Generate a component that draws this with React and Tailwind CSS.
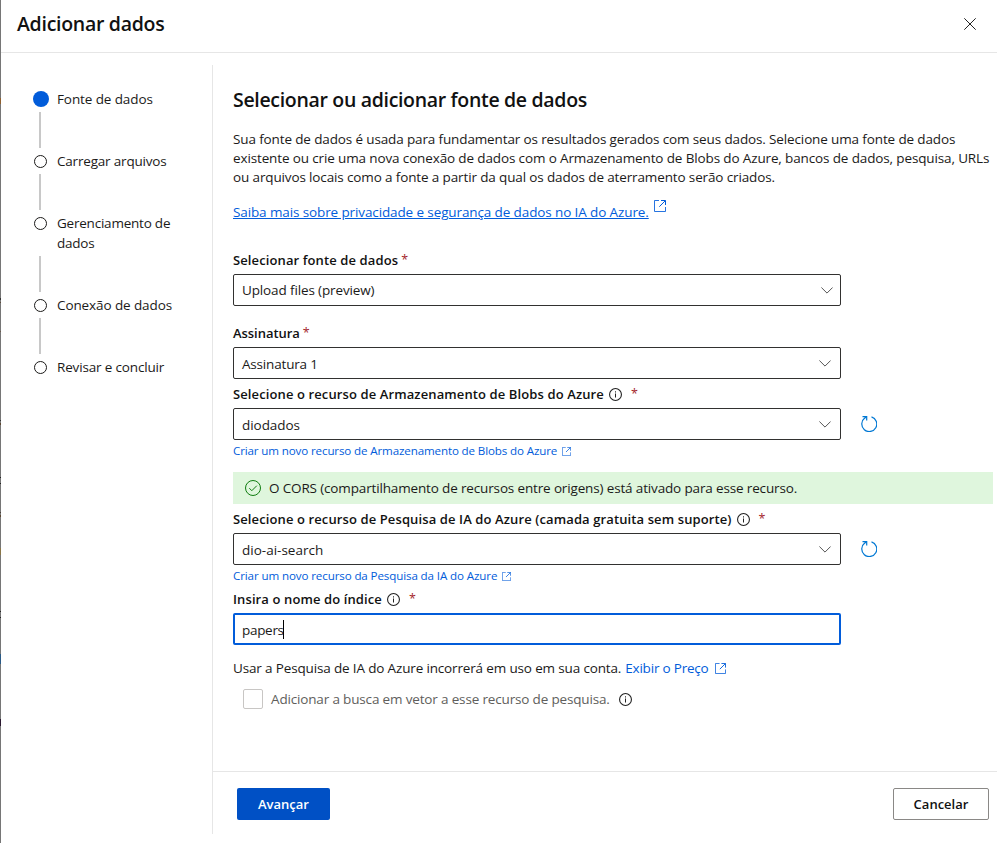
import React from "react";

const steps = [
  { lines: ["Fonte de dados"], active: true, tracking: "tracking-[-0.1px]" },
  { lines: ["Carregar arquivos"], tracking: "tracking-[-0.19px]" },
  { lines: ["Gerenciamento de", "dados"], tracking: "tracking-[-0.22px]" },
  { lines: ["Conexão de dados"], tracking: "tracking-[-0.1px]" },
  { lines: ["Revisar e concluir"], tracking: "tracking-[-0.16px]" },
];

// Sliver of the dimmed page that shows beside the panel.
const backdropMarks = [
  "mt-[98px] h-[6px] bg-[#8f6030]",
  "mt-[194px] h-[2px] bg-[#333333]",
  "mt-[2px] h-px bg-[#5c4a3a]",
  "mt-[28px] h-px bg-[#6b5a4c]",
  "mt-[88px] h-px bg-[#333333]",
  "mt-[2px] h-[2px] bg-[#5c4630]",
  "mt-[52px] h-px bg-[#222222]",
  "mt-[5px] h-px bg-[#222222]",
  "mt-[28px] h-px bg-[#4a4038]",
  "mt-[2px] h-[2px] bg-[#5c4630]",
  "mt-[31px] h-[7px] bg-[#8a7648]",
  "mt-[56px] h-px bg-[#222222]",
  "mt-[5px] h-px bg-[#222222]",
  "mt-[36px] h-[10px] bg-[#2a5a86]",
  "mt-[55px] h-[7px] bg-[#2a1830]",
];

function External({ className }) {
  return (
    <svg className={className} viewBox="0 0 12 12" fill="none" stroke="currentColor">
      <path d="M5 .5H.5v11h11V7" strokeOpacity=".85" />
      <path d="M7 .5h4.500V5M11.300.7 5.300 6.700" />
    </svg>
  );
}

function Chevron() {
  return (
    <svg className="h-[7px] w-3 text-[#555]" viewBox="0 0 12 7" fill="none" stroke="currentColor">
      <path d="M.4.5 6 6.100 11.600.5" />
    </svg>
  );
}

function Info({ className = "" }) {
  return (
    <svg className={`h-[13px] w-[13px] shrink-0 text-[#222] ${className}`} viewBox="0 0 13 13" fill="none" stroke="currentColor">
      <circle cx="6.500" cy="6.500" r="5.950" strokeWidth="1.100" />
      <path d="M6.500 5.500v4M6.500 3.300v1.200" />
    </svg>
  );
}

function Refresh() {
  return (
    <svg className="ml-5 h-4 w-4 shrink-0 text-[#0078d4]" viewBox="0 0 16 16" fill="none" stroke="currentColor">
      <path d="M10.500.9A7.500 7.500 0 1 1 3.700 2.100" strokeWidth="1.200" />
      <path d="M1.500.6h4.200v4" strokeWidth="1.200" />
      <path d="M5.400.8 3.300 2.500" strokeWidth="1.200" />
    </svg>
  );
}

function Label({ text, tracking = "tracking-[0.11px]", info }) {
  return (
    <div className="flex h-5 items-center text-[13px] font-semibold text-[#111]">
      <span className={tracking}>{text}</span>
      {info && <Info className="ml-[5px]" />}
      <span className={`text-[12.500px] font-normal text-[#a4262c] ${info ? "ml-[9px]" : "ml-[3px]"}`}>*</span>
    </div>
  );
}

function Select({ value, tracking, refresh, chevron = "pr-[9px]", text = "pt-[2px]" }) {
  return (
    <div className="mt-1 flex h-8 items-center">
      <div className={`flex h-8 w-[608px] items-center justify-between rounded-[2px] border border-[#323130] pl-2 ${chevron}`}>
        <span className={`${tracking} ${text}`}>{value}</span>
        <Chevron />
      </div>
      {refresh && <Refresh />}
    </div>
  );
}

export default function App() {
  return (
    <div className="flex h-[843px] w-[997px] overflow-hidden bg-white font-['Open_Sans','Noto_Sans',sans-serif] text-[13.5px] leading-5 whitespace-nowrap text-[#1b1a19]">
      <div className="flex w-px shrink-0 flex-col bg-[#767676]">
        {backdropMarks.map((mark, i) => <div key={i} className={`w-px shrink-0 ${mark}`} />)}
      </div>
      <div className="flex min-w-0 flex-1 flex-col">
        <header className="flex h-[53px] shrink-0 items-center justify-between border-b border-[#e6e6e6] pr-[21px] pb-1 pl-4">
          <h1 className="text-[19.5px] leading-7 font-semibold tracking-[-0.28px] text-[#111]">Adicionar dados</h1>
          <svg className="h-3 w-3 text-[#222]" viewBox="0 0 12 12" stroke="currentColor">
            <path d="m.3.3 11.400 11.400M11.700.3.3 11.700" />
          </svg>
        </header>
        <div className="flex flex-1">
          <nav className="mt-3 mb-[9px] w-[212px] shrink-0 border-r border-[#e6e6e6] pt-6 pl-8">
            {steps.map((s, i) => (
              <div key={s.lines[0]} className="flex">
                <div className="flex w-4 flex-col items-center">
                  <div className={s.active ? "flex h-5 w-4 items-center" : "flex h-5 w-4 items-center pl-px"}>
                    <div className={s.active ? "h-4 w-4 rounded-full bg-[#015cda]" : "h-[13px] w-[13px] rounded-full border border-[#1b1a19]"} />
                  </div>
                  {i < steps.length - 1 && (
                    <div className={s.lines.length > 1 ? "mt-[23px] mr-[2px] mb-[3px] h-9 w-[2px] bg-[#c8c8c8]" : "mt-[3px] mr-[2px] mb-[3px] h-9 w-[2px] bg-[#c8c8c8]"} />
                  )}
                </div>
                <div className={`pl-2 ${s.tracking}`}>
                  {s.lines.map((l) => <div key={l}>{l}</div>)}
                </div>
              </div>
            ))}
          </nav>
          <div className="flex min-w-0 flex-1 flex-col">
            <main className="h-[718px] pt-[33px] pl-5">
              <h2 className="text-[19.5px] leading-7 font-semibold tracking-[-0.32px] text-[#111]">Selecionar ou adicionar fonte de dados</h2>
              <div className="mt-4 leading-[19px] tracking-[-0.133px]">
                <div>Sua fonte de dados é usada para fundamentar os resultados gerados com seus dados. Selecione uma fonte de dados</div>
                <div>existente ou crie uma nova conexão de dados com o Armazenamento de Blobs do Azure, bancos de dados, pesquisa, URLs</div>
                <div>ou arquivos locais como a fonte a partir da qual os dados de aterramento serão criados.</div>
              </div>
              <div className="mt-[15px] flex h-5 text-[#015cda]">
                <span className="tracking-[-0.113px] underline underline-offset-1">Saiba mais sobre privacidade e segurança de dados no IA do Azure.</span>
                <External className="-mt-[2px] ml-[5px] h-3 w-3" />
              </div>
              <div className="mt-7">
                <Label text="Selecionar fonte de dados" />
                <Select value="Upload files (preview)" tracking="tracking-[-0.13px]" chevron="pr-[7px]" text="" />
              </div>
              <div className="mt-[17px]">
                <Label text="Assinatura" tracking="tracking-[-0.05px]" />
                <Select value="Assinatura 1" tracking="tracking-[-0.18px]" />
              </div>
              <div className="mt-[5px]">
                <Label text="Selecione o recurso de Armazenamento de Blobs do Azure" info />
                <Select value="diodados" tracking="tracking-[-0.05px]" refresh />
                <div className="mt-[3px] flex h-4 items-center text-[11.6px] leading-4 text-[#015cda]">
                  <span className="tracking-[-0.135px]">Criar um novo recurso de Armazenamento de Blobs do Azure</span>
                  <External className="ml-[4.5px] h-[9px] w-[9px]" />
                </div>
              </div>
              <div className="mt-[13px] flex h-8 w-[760px] items-center bg-[#dff6dd] pl-3">
                <svg className="h-4 w-4 text-[#107c10]" viewBox="0 0 16 16" fill="none" stroke="currentColor">
                  <circle cx="8" cy="8" r="7.500" />
                  <path d="m4.300 8.200 2.500 2.500 5-5" />
                </svg>
                <span className="pl-2 tracking-[-0.149px]">O CORS (compartilhamento de recursos entre origens) está ativado para esse recurso.</span>
              </div>
              <div className="mt-[5px]">
                <Label text="Selecione o recurso de Pesquisa de IA do Azure (camada gratuita sem suporte)" info />
                <Select value="dio-ai-search" tracking="tracking-normal" refresh />
                <div className="mt-[3px] flex h-4 items-center text-[11.6px] leading-4 text-[#015cda]">
                  <span className="tracking-[-0.12px]">Criar um novo recurso da Pesquisa da IA do Azure</span>
                  <External className="ml-[4.5px] h-[9px] w-[9px]" />
                </div>
              </div>
              <div className="mt-[5px]">
                <Label text="Insira o nome do índice" info />
                <div className="mt-1 flex h-8 w-[608px] items-center rounded-[2px] border-2 border-[#015cda] pl-[7px]">
                  <span className="pt-[2px] tracking-[-0.3px]">papers</span>
                  <div className="-ml-px h-[19px] w-px bg-black" />
                </div>
              </div>
              <div className="mt-[13px] flex h-5 items-center">
                <span className="tracking-[-0.152px]">Usar a Pesquisa de IA do Azure incorrerá em uso em sua conta.</span>
                <span className="ml-1 tracking-[-0.2px] text-[#015cda]">Exibir o Preço</span>
                <External className="ml-[6px] h-[11px] w-[11px] text-[#015cda]" />
              </div>
              <div className="mt-[11px] flex h-5 items-center pl-[10px]">
                <div className="h-5 w-5 rounded-[2px] border border-[#c8c6c4]" />
                <span className="ml-2 tracking-[-0.16px] text-[#605e5c]">Adicionar a busca em vetor a esse recurso de pesquisa.</span>
                <Info className="ml-[9px]" />
              </div>
            </main>
            <footer className="flex flex-1 justify-between border-t border-[#e6e6e6] pt-4 pr-2 pl-6">
              <button className="h-8 w-[93px] rounded-[2px] bg-[#0050c5] text-[13px] font-semibold text-white">Avançar</button>
              <button className="h-8 w-24 rounded-[2px] border border-[#8a8886] text-[13px] font-semibold text-[#111]">Cancelar</button>
            </footer>
          </div>
        </div>
      </div>
    </div>
  );
}
